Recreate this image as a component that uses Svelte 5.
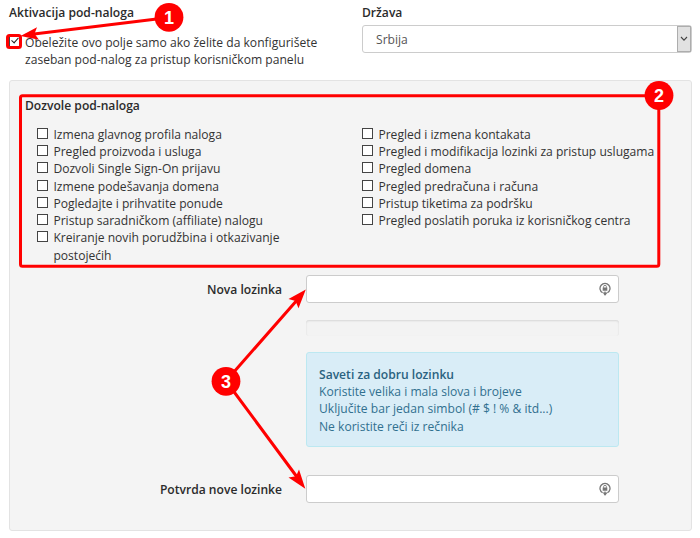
<script>
    let subaccount = true;
    let country = 'Srbija';
    let password = '';
    let confirmPassword = '';

    const leftPermissions = [
        'Izmena glavnog profila naloga',
        'Pregled proizvoda i usluga',
        'Dozvoli Single Sign-On prijavu',
        'Izmene podešavanja domena',
        'Pogledajte i prihvatite ponude',
        'Pristup saradničkom (affiliate) nalogu',
        'Kreiranje novih porudžbina i otkazivanje postojećih'
    ];

    const rightPermissions = [
        'Pregled i izmena kontakata',
        'Pregled i modifikacija lozinki za pristup uslugama',
        'Pregled domena',
        'Pregled predračuna i računa',
        'Pristup tiketima za podršku',
        'Pregled poslatih poruka iz korisničkog centra'
    ];

    const markers = [
        { n: 1, x: 169, y: 17.3 },
        { n: 2, x: 659, y: 95.5 },
        { n: 3, x: 226, y: 381.3 }
    ];
</script>

{#snippet keyIcon()}
    <svg class="key" width="12" height="14" viewBox="0 0 12 14">
        <path d="M3.6 10.8A5 5 0 1 1 8.4 10.8" fill="none" stroke="#777" stroke-width="1.3" />
        <path d="M4.6 5.8V4.7a1.4 1.4 0 0 1 2.8 0v1.1" fill="none" stroke="#777" stroke-width="0.9" />
        <path d="M3.7 5.5h4.6v3.3H3.7zM5.4 9.6h1.2v1H8.6L6.4 13.4h-.8L3.8 10.6h1.6z" fill="#777" />
    </svg>
{/snippet}

<div class="page">
    <div class="top">
        <div class="activation">
            <div class="title">Aktivacija pod-naloga</div>
            <label class="check main-check">
                <input type="checkbox" bind:checked={subaccount}>
                <span>Obeležite ovo polje samo ako želite da konfigurišete zaseban pod-nalog za pristup korisničkom panelu</span>
            </label>
        </div>
        <div class="country">
            <div class="title">Država</div>
            <div class="select">
                <span>{country}</span>
                <span class="arrow">
                    <svg width="8" height="6" viewBox="0 0 8 6">
                        <path d="M1 1l3 3.2L7 1" fill="none" stroke="#444" stroke-width="1.1" />
                    </svg>
                </span>
            </div>
        </div>
    </div>

    <div class="well">
        <div class="title">Dozvole pod-naloga</div>
        <div class="permissions">
            {#each [leftPermissions, rightPermissions] as list}
                <div class="list">
                    {#each list as permission}
                        <label class="check">
                            <input type="checkbox">
                            <span>{permission}</span>
                        </label>
                    {/each}
                </div>
            {/each}
        </div>

        <div class="form">
            <label class="title" for="pw">Nova lozinka</label>
            <div class="field">
                <input id="pw" type="password" bind:value={password}>
                {@render keyIcon()}
            </div>
            <div class="progress"></div>
            <div class="alert">
                <strong>Saveti za dobru lozinku</strong><br>
                Koristite velika i mala slova i brojeve<br>
                Uključite bar jedan simbol (# $ ! % &amp; itd...)<br>
                Ne koristite reči iz rečnika
            </div>
            <label class="title" for="pw2">Potvrda nove lozinke</label>
            <div class="field">
                <input id="pw2" type="password" bind:value={confirmPassword}>
                {@render keyIcon()}
            </div>
        </div>
    </div>

    <!-- numbered instructions over the form -->
    <svg class="marks" width="700" height="538" viewBox="0 0 700 538">
        <g fill="none" stroke="#f00" stroke-width="3">
            <rect x="7.5" y="35.5" width="13" height="12" rx="2" />
            <rect x="20.5" y="95.7" width="638.3" height="170.6" rx="2" />
            <path d="M169 17.5L32 34.2M226 381L298 299M226 381L297 477" />
        </g>
        <g fill="#f00">
            <path d="M20.5 36L37 27.3L34.5 33.8L39 39.8Z" />
            <path d="M305.8 289.5L288.5 299L295.5 301L298.5 308.2Z" />
            <path d="M305.3 488.8L288.5 477.5L296 476.3L299 469.5Z" />
        </g>
        {#each markers as m}
            <circle cx={m.x} cy={m.y} r="14.4" fill="#f00" />
            <text x={m.x} y={m.y + 6.2} text-anchor="middle">{m.n}</text>
        {/each}
    </svg>
</div>

<style>
    :global(body) {
        margin: 0;
        background: #fff;
    }

    .page {
        position: relative;
        box-sizing: border-box;
        width: 700px;
        height: 538px;
        padding: 4px 8px 0 9px;
        overflow: hidden;
        font-family: "Open Sans", "Noto Sans", sans-serif;
        font-size: 12.1px;
        line-height: 17.3px;
        color: #333;
    }

    .title {
        font-weight: 600;
        color: #2b2b2b;
    }

    .top {
        display: grid;
        grid-template-columns: 353px 330px;
        height: 76px;
    }

    .check {
        display: flex;
        align-items: flex-start;
        gap: 5.4px;
    }

    .main-check {
        margin-top: 12.5px;
        gap: 5px;
        width: 325px;
    }

    .check input {
        appearance: none;
        flex: none;
        box-sizing: border-box;
        width: 11px;
        height: 11px;
        margin: 2px 0 0;
        border: 1px solid #444;
        background: #fff;
    }

    .main-check input {
        position: relative;
    }

    .main-check input:checked::after {
        content: "";
        position: absolute;
        left: 3px;
        top: -1px;
        width: 3px;
        height: 6px;
        border: solid #222;
        border-width: 0 1.2px 1.2px 0;
        transform: rotate(42deg);
    }

    .select {
        display: flex;
        justify-content: space-between;
        align-items: center;
        box-sizing: border-box;
        height: 28px;
        margin-top: 4px;
        padding-left: 13px;
        border: 1px solid #ccc;
        border-radius: 3px;
        background: #fff;
        color: #555;
    }

    .arrow {
        display: flex;
        align-items: center;
        justify-content: center;
        box-sizing: border-box;
        width: 14px;
        height: 26px;
        border: 1px solid #adadad;
        background: #e1e1e1;
    }

    .well {
        box-sizing: border-box;
        height: 451px;
        padding: 16px 15px 0;
        border: 1px solid #e3e3e3;
        border-radius: 3px;
        background: #f4f4f4;
    }

    .permissions {
        display: grid;
        grid-template-columns: 325px 310px;
        margin: 11.4px 0 0 12px;
    }

    .list:first-child {
        width: 270px;
    }

    .form {
        display: grid;
        grid-template-columns: 257px 313px;
        column-gap: 24px;
        margin-top: 10.6px;
    }

    .form .title {
        padding-top: 6px;
        text-align: right;
    }

    .field {
        display: flex;
        align-items: center;
        box-sizing: border-box;
        height: 28px;
        padding-right: 7px;
        border: 1px solid #ccc;
        border-radius: 3px;
        background: #fff;
    }

    .field input {
        flex: 1;
        min-width: 0;
        padding: 0 10px;
        border: 0;
        outline: 0;
        background: transparent;
    }

    .progress {
        grid-column: 2;
        box-sizing: border-box;
        height: 16px;
        margin-top: 17px;
        border-radius: 3px;
        background: #f3f3f3;
        box-shadow: inset 0 1px 2px rgba(0, 0, 0, 0.12);
    }

    .alert {
        grid-column: 2;
        box-sizing: border-box;
        height: 95px;
        margin: 16px 0 28px;
        padding: 13px 12px;
        border: 1px solid #bce8f1;
        border-radius: 3px;
        background: #d9edf7;
        color: #31708f;
    }

    .alert strong {
        font-weight: 600;
        color: #2a6280;
    }

    .marks {
        position: absolute;
        left: 0;
        top: 0;
        pointer-events: none;
    }

    .marks text {
        font: bold 18px "Liberation Sans", Arial, sans-serif;
        fill: #fff;
    }
</style>
